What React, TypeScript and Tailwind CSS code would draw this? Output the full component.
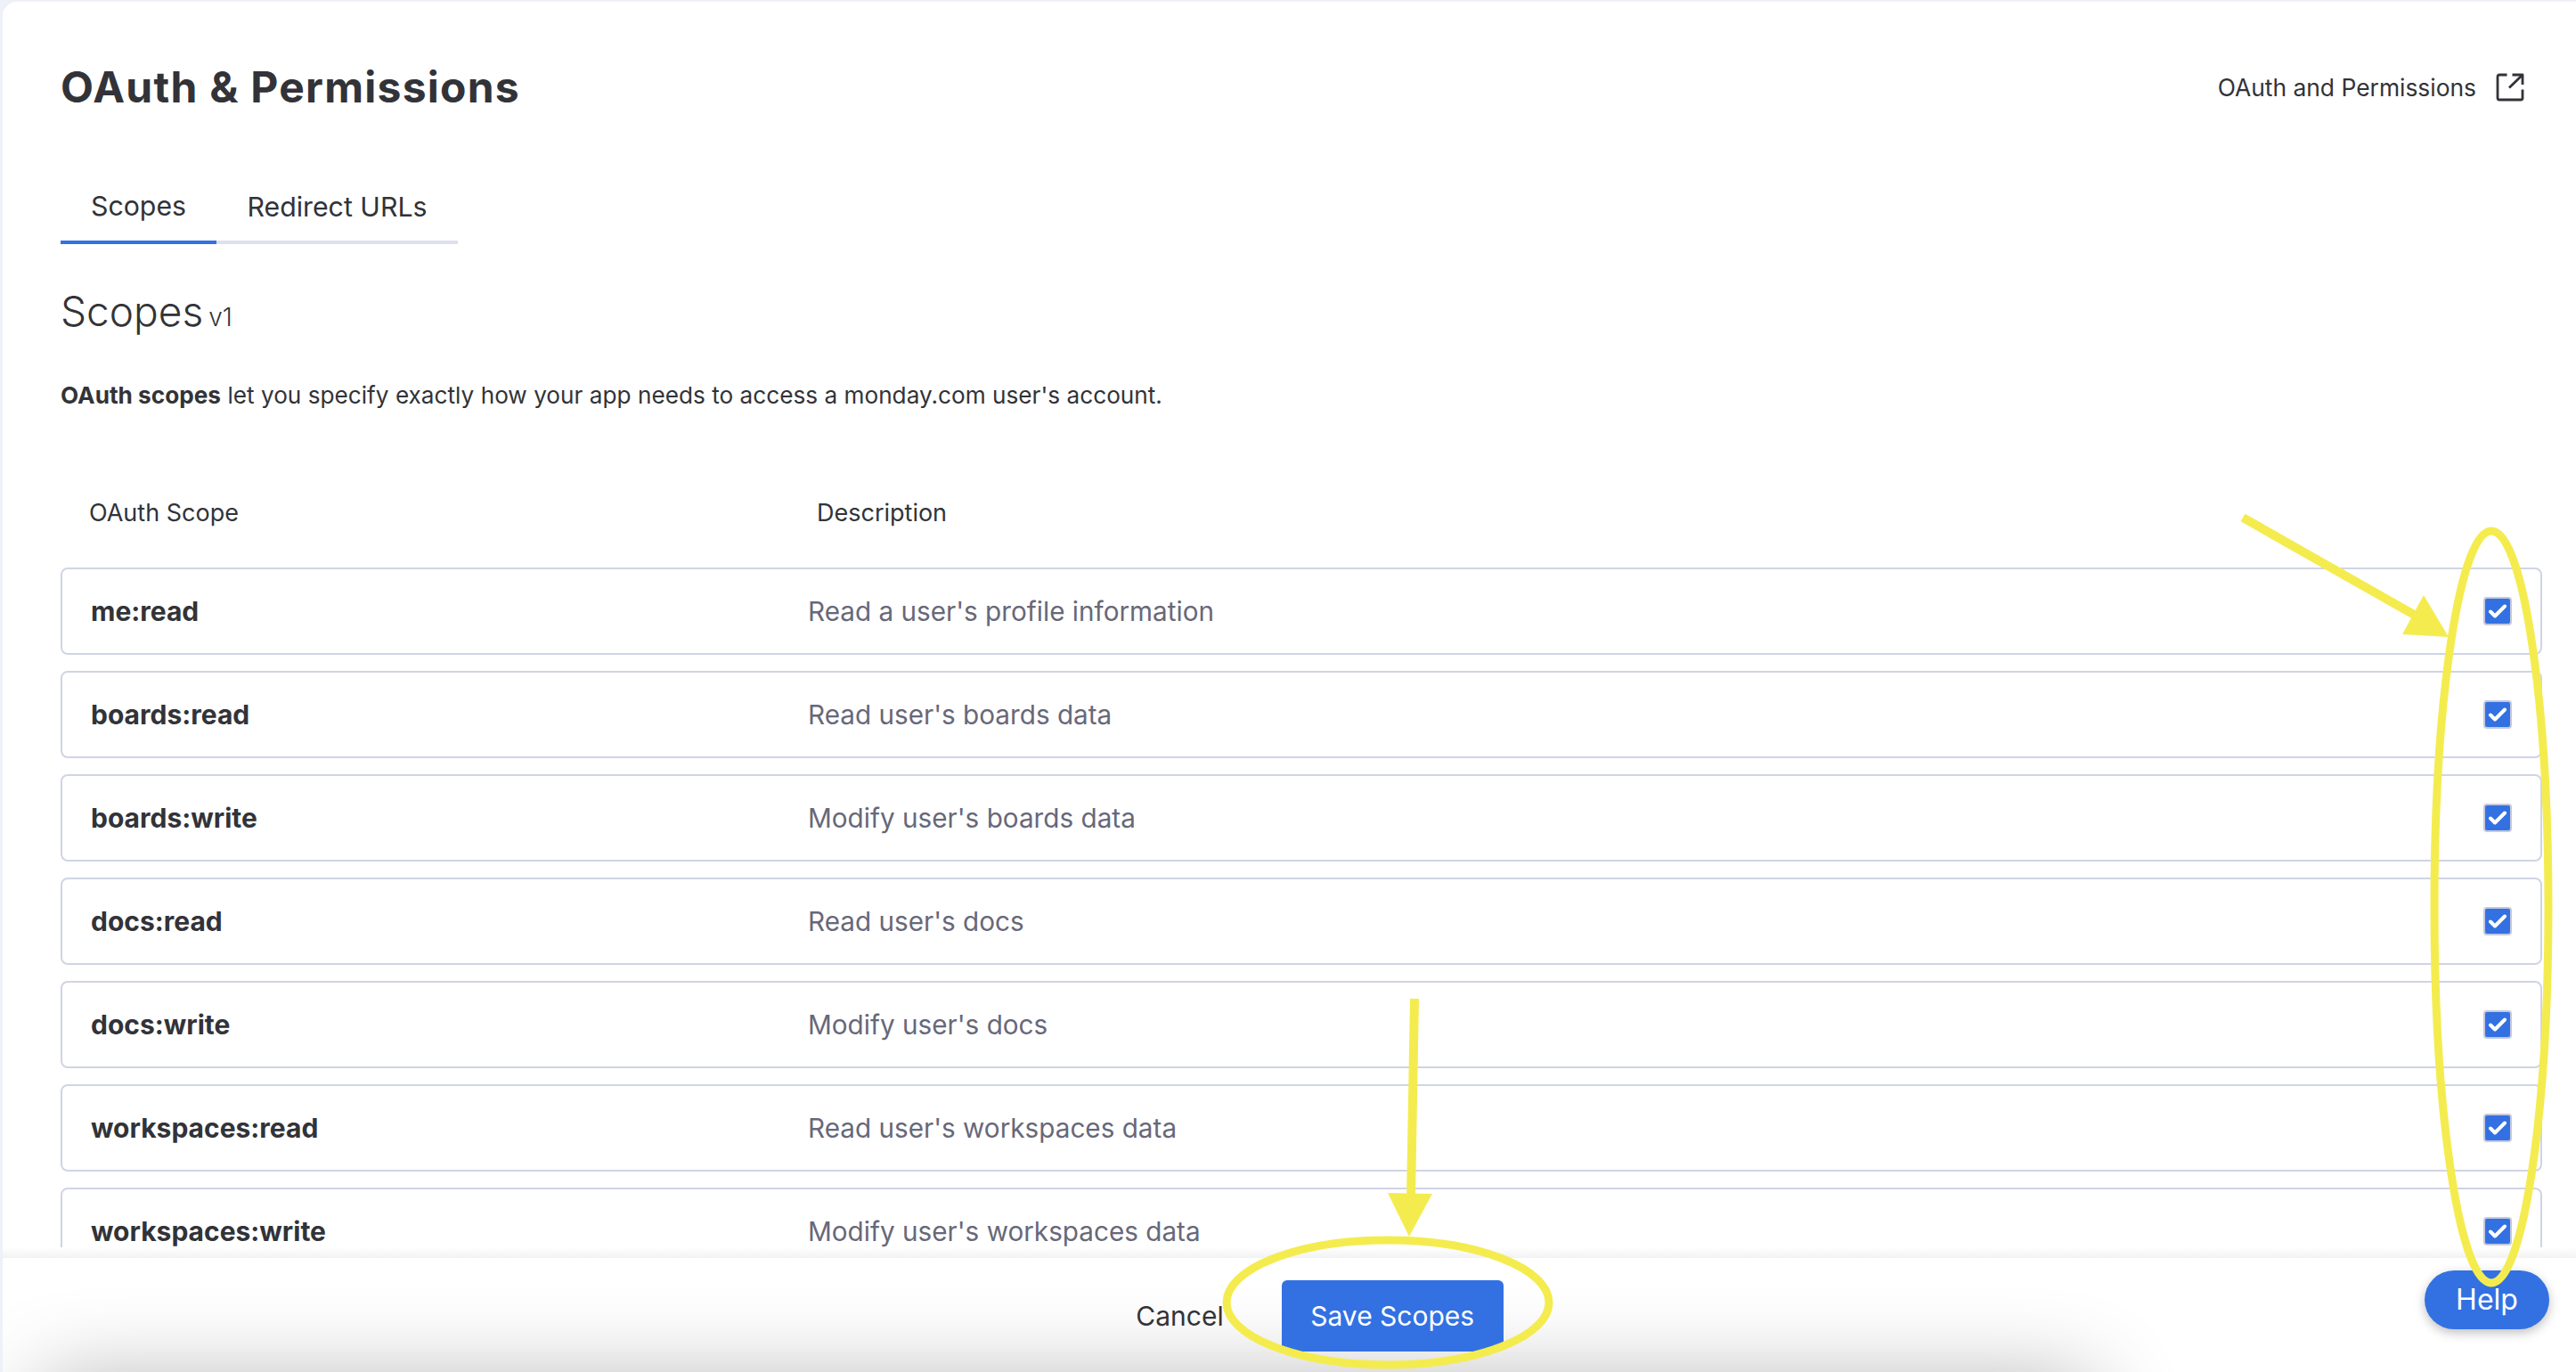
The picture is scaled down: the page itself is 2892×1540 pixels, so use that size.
const rows = [
  { scope: "me:read", desc: "Read a user's profile information" },
  { scope: "boards:read", desc: "Read user's boards data" },
  { scope: "boards:write", desc: "Modify user's boards data" },
  { scope: "docs:read", desc: "Read user's docs" },
  { scope: "docs:write", desc: "Modify user's docs" },
  { scope: "workspaces:read", desc: "Read user's workspaces data" },
  { scope: "workspaces:write", desc: "Modify user's workspaces data" },
];

function Checkbox() {
  return (
    <div className="w-[32px] h-[32px] rounded-[4px] border-2 border-[#c5c9dc] bg-[#3371e2] flex items-center justify-center">
      <svg width="22" height="18" viewBox="0 0 22 18" fill="none">
        <path d="M3 9.5 L8 14.5 L19 3.5" stroke="#fff" strokeWidth="4" strokeLinecap="round" strokeLinejoin="round" />
      </svg>
    </div>
  );
}

function LinkIcon() {
  return (
    <svg width="32" height="32" viewBox="0 0 32 32" fill="none" stroke="#323338" strokeWidth="2.8" strokeLinejoin="round">
      <path d="M12.5 2 H4 a2 2 0 0 0 -2 2 V28 a2 2 0 0 0 2 2 H28 a2 2 0 0 0 2 -2 V18.5" />
      <path d="M30 2 L15 16.5" />
      <path d="M18.5 2 H30 V13" />
    </svg>
  );
}

// yellow marks somebody drew on top of the screenshot
function Annotations() {
  return (
    <svg className="absolute inset-0 pointer-events-none" width="2892" height="1540" viewBox="0 0 2892 1540" fill="none">
      <ellipse cx="2797" cy="1018" rx="64" ry="422" stroke="#f4ec4f" strokeWidth="9" />
      <ellipse cx="1558" cy="1462" rx="181" ry="70" stroke="#f4ec4f" strokeWidth="9" />
      <path d="M2518 581 L2712 691" stroke="#f4ec4f" strokeWidth="10" />
      <path d="M2721 668 L2697 712 L2749 715 Z" fill="#f4ec4f" />
      <path d="M1588 1121 L1584 1345" stroke="#f4ec4f" strokeWidth="10" />
      <path d="M1558 1339 L1608 1340 L1582 1388 Z" fill="#f4ec4f" />
    </svg>
  );
}

export default function App() {
  return (
    <div className="relative w-full h-[1540px] overflow-hidden bg-[#eef1f8] pt-[2px] pl-[3px] font-['Inter',sans-serif] text-[#323338]">
      <div className="h-full flex flex-col bg-white rounded-tl-[16px]">
        {/* Content */}
        <div className="h-[1398px] overflow-hidden pl-[65px] pr-[38px]">
          <div className="flex items-center justify-between pt-[64px] h-[128px]">
            <h1 className="text-[48px] leading-[60px] font-bold tracking-[1.25px]">OAuth &amp; Permissions</h1>
            <a className="flex items-center gap-[22px] text-[26.4px] pr-[20px] pt-[1px]">
              OAuth and Permissions
              <LinkIcon />
            </a>
          </div>

          <div className="flex mt-[60px] w-[446px] border-b-4 border-[#dde0ec] text-[30.3px] h-[84px]">
            <div className="w-[175px] h-[84px] pt-[3px] border-b-4 border-[#3371e2] flex items-center justify-center">Scopes</div>
            <div className="flex-1 h-[84px] pt-[2px] flex items-center justify-center">Redirect URLs</div>
          </div>

          <h2 className="mt-[47px] text-[46px] leading-[56px] font-light">
            Scopes<span className="text-[28px] ml-[6px]">v1</span>
          </h2>

          <p className="mt-[40px] text-[26.2px] leading-[40px]">
            <b className="font-bold">OAuth scopes</b> let you specify exactly how your app needs to access a monday.com user's account.
          </p>

          <div className="flex mt-[82px] text-[27px] h-[60px] items-center">
            <div className="w-[849px] pl-[32px]">OAuth Scope</div>
            <div>Description</div>
          </div>

          <div className="mt-[31px] flex flex-col gap-[18px]">
            {rows.map((r) => (
              <div key={r.scope} className="h-[98px] shrink-0 flex items-center border-2 border-[#d0d4e4] rounded-[8px] pl-[32px] pr-[32px]">
                <div className="w-[805px] text-[30px] font-bold">{r.scope}</div>
                <div className="flex-1 text-[29.7px] text-[#676879]">{r.desc}</div>
                <Checkbox />
              </div>
            ))}
          </div>
        </div>

        {/* Footer */}
        <div className="relative h-[140px] bg-white overflow-hidden">
          <div className="absolute top-0 inset-x-0 h-[12px] bg-gradient-to-b from-white to-[#f2f2f2]" />
          <div className="absolute top-[150px] left-[42px] w-[2305px] h-[200px] shadow-[0_0_100px_0_rgba(0,0,0,0.3)]" />
          <div className="relative flex items-center justify-center h-full pt-[14px] pl-[68px]">
            <span className="text-[30px] mr-[65px]">Cancel</span>
            <button className="w-[249px] h-[80px] rounded-[6px] bg-[#3371e2] text-white text-[30px]">Save Scopes</button>
          </div>
        </div>
      </div>

      <button className="absolute left-[2722px] top-[1426px] w-[140px] h-[66px] rounded-full bg-[#3371e2] text-white text-[32px] shadow-[0_4px_12px_rgba(0,0,0,0.25)]">
        Help
      </button>
      <Annotations />
    </div>
  );
}
